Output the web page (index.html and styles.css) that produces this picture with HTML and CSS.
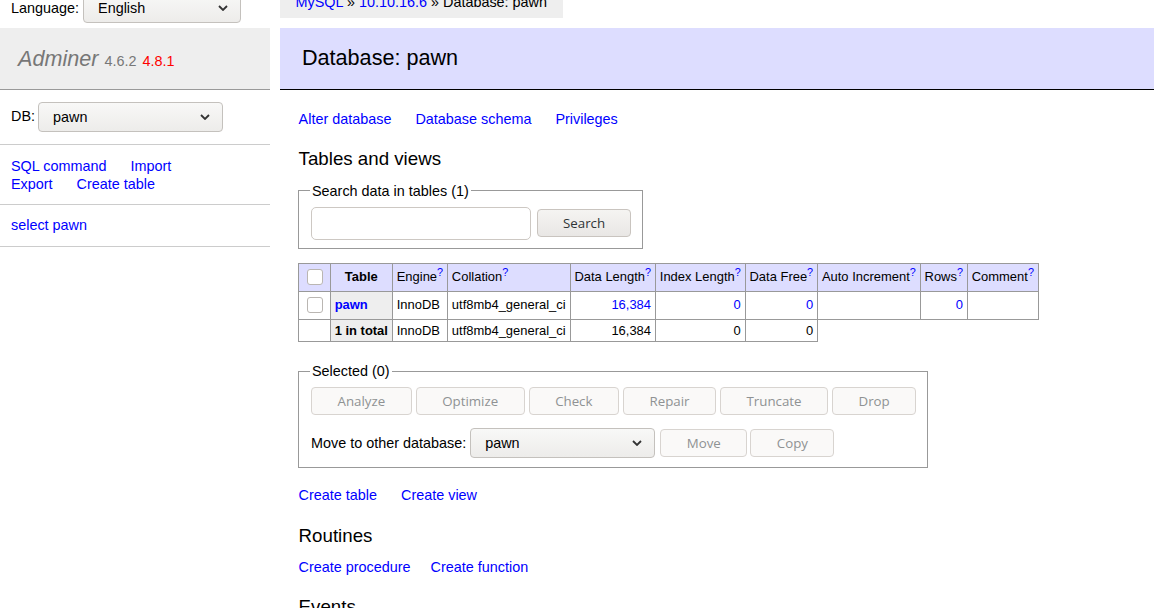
FILE: index.html
```html
<!DOCTYPE html>
<html lang="en">
<head>
<meta charset="utf-8">
<title>Database: pawn - Adminer</title>
<link rel="stylesheet" href="styles.css">
</head>
<body>
<div class="page">
  <div class="top">
    <div class="lang">
      <span>Language:</span>
      <span class="sel sel-lang"><select><option>English</option></select><svg class="chev" viewBox="0 0 10 6" width="10" height="6"><path d="M1 1l4 4 4-4" fill="none" stroke="#333" stroke-width="1.8"/></svg></span>
    </div>
    <div class="breadcrumb"><a href="#">MySQL</a> » <a href="#">10.10.16.6</a> » Database: pawn</div>
  </div>
  <div class="main">
    <aside class="menu">
      <h1><a href="#" class="h1link">Adminer</a> <span class="version">4.6.2</span> <a href="#" class="version new">4.8.1</a></h1>
      <div class="mblock dbrow">
        <span>DB:</span>
        <span class="sel sel-db"><select><option>pawn</option></select><svg class="chev" viewBox="0 0 10 6" width="10" height="6"><path d="M1 1l4 4 4-4" fill="none" stroke="#333" stroke-width="1.8"/></svg></span>
      </div>
      <div class="mblock links mlinks">
        <a href="#">SQL command</a> <a href="#">Import</a><br>
        <a href="#">Export</a> <a href="#">Create table</a>
      </div>
      <div class="mblock">
        <a href="#">select pawn</a>
      </div>
    </aside>
    <main class="content">
      <h2>Database: pawn</h2>
      <div class="inner">
        <p class="links"><a href="#">Alter database</a> <a href="#">Database schema</a> <a href="#">Privileges</a></p>
        <h3>Tables and views</h3>
        <fieldset class="fs fs-search">
          <legend>Search data in tables (1)</legend>
          <div class="row">
            <input type="search" class="txt">
            <button class="btn b-search">Search</button>
          </div>
        </fieldset>
        <table class="tbl">
          <thead>
            <tr>
              <td><input type="checkbox" class="cb"></td>
              <th>Table</th>
              <td>Engine<a href="#"><sup>?</sup></a></td>
              <td>Collation<a href="#"><sup>?</sup></a></td>
              <td>Data Length<a href="#"><sup>?</sup></a></td>
              <td>Index Length<a href="#"><sup>?</sup></a></td>
              <td>Data Free<a href="#"><sup>?</sup></a></td>
              <td>Auto Increment<a href="#"><sup>?</sup></a></td>
              <td>Rows<a href="#"><sup>?</sup></a></td>
              <td>Comment<a href="#"><sup>?</sup></a></td>
            </tr>
          </thead>
          <tbody>
            <tr>
              <td><input type="checkbox" class="cb"></td>
              <th><a href="#" class="bold">pawn</a></th>
              <td>InnoDB</td>
              <td>utf8mb4_general_ci</td>
              <td class="number"><a href="#">16,384</a></td>
              <td class="number"><a href="#">0</a></td>
              <td class="number"><a href="#">0</a></td>
              <td class="number"></td>
              <td class="number"><a href="#">0</a></td>
              <td></td>
            </tr>
            <tr>
              <td></td>
              <th class="bold">1 in total</th>
              <td>InnoDB</td>
              <td>utf8mb4_general_ci</td>
              <td class="number">16,384</td>
              <td class="number">0</td>
              <td class="number">0</td>
            </tr>
          </tbody>
        </table>
        <fieldset class="fs fs-sel">
          <legend>Selected (0)</legend>
          <div class="row btnrow">
            <button class="btn" disabled>Analyze</button>
            <button class="btn" disabled>Optimize</button>
            <button class="btn" disabled>Check</button>
            <button class="btn" disabled>Repair</button>
            <button class="btn" disabled>Truncate</button>
            <button class="btn" disabled>Drop</button>
          </div>
          <div class="row moverow">
            <span>Move to other database:</span>
            <span class="sel sel-move"><select><option>pawn</option></select><svg class="chev" viewBox="0 0 10 6" width="10" height="6"><path d="M1 1l4 4 4-4" fill="none" stroke="#333" stroke-width="1.8"/></svg></span>
            <button class="btn b-move" disabled>Move</button>
            <button class="btn b-copy" disabled>Copy</button>
          </div>
        </fieldset>
        <p class="links after-sel"><a href="#">Create table</a> <a href="#">Create view</a></p>
        <h3>Routines</h3>
        <p class="links after-h3"><a href="#">Create procedure</a><a href="#">Create function</a></p>
        <h3>Events</h3>
        <p class="links after-h3"><a href="#">Create event</a></p>
      </div>
    </main>
  </div>
</div>
</body>
</html>
```
FILE: styles.css
```css
* { box-sizing: border-box; }
html, body { margin: 0; overflow: hidden; }
body {
  font: 14.4px/1.25 "Liberation Sans", Arial, sans-serif;
  color: #000;
  background: #fff;
}
a { color: blue; text-decoration: none; }

.page { margin-top: -10px; }

.top { display: flex; height: 28px; align-items: flex-start; }
.lang {
  width: 280px;
  flex: none;
  display: flex;
  align-items: center;
  gap: 4px;
  padding: 3px 11px 0;
}
.breadcrumb {
  background: #eee;
  height: 28px;
  line-height: 25.6px;
  padding: 0 15.5px;
  white-space: nowrap;
}

/* selects */
.sel { position: relative; display: inline-block; }
.sel select {
  -webkit-appearance: none;
  appearance: none;
  height: 30px;
  font: 14.4px "Liberation Sans", Arial, sans-serif;
  color: #000;
  padding: 0 30px 0 14px;
  border: 1px solid #c4c1bd;
  border-radius: 4px;
  background: linear-gradient(#f8f8f7, #edecea);
  display: block;
}
.sel .chev { position: absolute; right: 13px; top: 12px; pointer-events: none; }
.sel-lang select { width: 158px; }
.sel-db select { width: 185px; }
.sel-move select { width: 185px; }

.main { display: flex; margin-top: 10px; align-items: flex-start; }
.menu { width: 270px; flex: none; }
.content { flex: 1; margin-left: 10px; min-width: 0; }

h1 {
  margin: 0;
  height: 62px;
  font-size: 21.6px;
  line-height: 26px;
  font-weight: normal;
  font-style: italic;
  padding: 18px 18px 0;
  background: #eee;
  border-bottom: 1px solid #999;
  color: #777;
  white-space: nowrap;
}
h1 .h1link { color: #777; }
.version { font-size: 14.4px; line-height: 1; font-style: normal; color: #777; }
.version.new { color: #f00; }

.mblock { padding: 11.6px 11px; border-bottom: 1px solid #ccc; }
.dbrow { display: flex; align-items: center; gap: 3px; padding-top: 11.4px; padding-bottom: 11.4px; }
.dbrow > span:first-child { line-height: 31px; }
.mlinks { padding-top: 12.2px; padding-bottom: 10.8px; }
.links a { margin-right: 20px; white-space: nowrap; }

h2 {
  margin: 0 0 20px;
  height: 62px;
  font-size: 21.6px;
  line-height: 26px;
  font-weight: normal;
  padding: 17px 22px 0;
  background: #ddf;
  border-bottom: 1px solid #000;
}
.inner { padding-left: 18px; }
.inner > p.links, .inner > h3 { padding-left: 0.6px; }
p { margin: 0; }
h3 { font-size: 18.72px; line-height: 1.25; font-weight: normal; margin: 19.2px 0 0; }

.fs {
  width: max-content;
  border: 1px solid #999;
  margin: 11px 0 0;
  padding: 7px 11px 8px 12px;
  min-width: 0;
}
.fs legend { padding: 0 2px; margin-left: -1px; }
.row { display: flex; align-items: center; }
.fs-search .row { gap: 6px; }
.txt {
  width: 220px;
  height: 33px;
  border: 1px solid #cdc8c3;
  border-radius: 5px;
  background: #fff;
  font: 14.4px "Liberation Sans", Arial, sans-serif;
  padding: 0 8px;
}

.btn {
  font: 13.3px "Open Sans", "DejaVu Sans", sans-serif;
  height: 28px;
  padding: 0 25.5px;
  border: 1px solid #c9c4bf;
  border-radius: 4px;
  background: linear-gradient(#f5f4f2, #e9e7e5);
  color: #2e3436;
}
.b-search { padding: 0 25px; }
.btn:disabled {
  background: #faf9f8;
  color: #8f9293;
  border-color: #d8d4d0;
}

.tbl {
  margin: 14px 0 0;
  border-collapse: collapse;
  font-size: 12.96px;
  line-height: 1.25;
}
.tbl td, .tbl th { border: 1px solid #999; padding: 2.6px 3.9px; }
.tbl th { background: #eee; text-align: left; }
.tbl thead th { text-align: center; padding: 2.6px 6.5px; background: #ddf; }
.tbl thead td { background: #ddf; }
.tbl sup { font-size: 10.8px; line-height: 0; }
.number { text-align: right; }
.bold { font-weight: bold; }
.cb {
  -webkit-appearance: none;
  appearance: none;
  width: 16px;
  height: 16px;
  margin: 3px 3px 3px 4px;
  border: 1px solid #bab6b2;
  border-radius: 3px;
  background: #fff;
  display: block;
}

.fs-sel { margin-top: 20px; padding: 7px 11px 9px 12px; }
.btnrow { gap: 4px; }
.moverow { margin-top: 13px; }
.moverow .sel { margin-left: 4px; }
.moverow .b-move { margin-left: 5px; }
.moverow .b-copy { margin-left: 3px; }

.after-sel { margin-top: 18px; }
.after-h3 { margin-top: 11.4px; }
```
